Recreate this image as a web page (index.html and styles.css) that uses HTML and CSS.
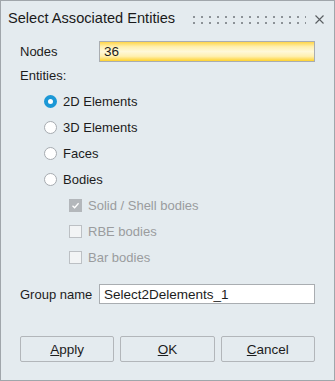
FILE: index.html
```html
<!DOCTYPE html>
<html lang="en">

<head>
    <meta charset="UTF-8">
    <title>Select Associated Entities</title>
    <link rel="stylesheet" href="styles.css">
</head>

<body>
    <div class="dialog">
        <div class="titlebar">
            <span class="title">Select Associated Entities</span>
            <div class="grip"></div>
            <svg class="close" width="9" height="9" viewBox="0 0 9 9">
                <path d="M0.5 0.5 L8.5 8.5 M8.5 0.5 L0.5 8.5" stroke="#5a5e62" stroke-width="1.1" fill="none"/>
            </svg>
        </div>

        <div class="content">
            <div class="row nodes-row">
                <label class="field-label">Nodes</label>
                <div class="input input-yellow">36</div>
            </div>

            <div class="row entities">Entities:</div>

            <div class="row option radio-row">
                <span class="radio checked"></span>
                <span>2D Elements</span>
            </div>
            <div class="row option radio-row">
                <span class="radio"></span>
                <span>3D Elements</span>
            </div>
            <div class="row option radio-row">
                <span class="radio"></span>
                <span>Faces</span>
            </div>
            <div class="row option radio-row">
                <span class="radio"></span>
                <span>Bodies</span>
            </div>

            <div class="row option check-row disabled">
                <span class="check checked">
                    <svg width="9" height="9" viewBox="0 0 9 9">
                        <path d="M1.5 4.8 L3.6 6.8 L7.6 2.2" stroke="#ffffff" stroke-width="1.3" fill="none"/>
                    </svg>
                </span>
                <span>Solid / Shell bodies</span>
            </div>
            <div class="row option check-row disabled">
                <span class="check"></span>
                <span>RBE bodies</span>
            </div>
            <div class="row option check-row disabled">
                <span class="check"></span>
                <span>Bar bodies</span>
            </div>

            <div class="row group-row">
                <label class="field-label">Group name</label>
                <div class="input">Select2Delements_1</div>
            </div>

            <div class="buttons">
                <button class="btn"><u>A</u>pply</button>
                <button class="btn"><u>O</u>K</button>
                <button class="btn"><u>C</u>ancel</button>
            </div>
        </div>
    </div>
</body>

</html>
```

FILE: styles.css
```css
body {
    margin: 0;
    padding: 0;
    font-family: "Liberation Sans", Arial, sans-serif;
    font-size: 13px;
    color: #1c1c1c;
    background: #e4ebef;
}

.dialog {
    box-sizing: border-box;
    width: 335px;
    height: 381px;
    border: 1px solid #a0a6ab;
    background: #e4ebef;
}

.titlebar {
    display: flex;
    align-items: center;
    height: 33px;
    padding-left: 7px;
}

.title {
    font-size: 14.6px;
    color: #1a1a1a;
}

.grip {
    width: 116px;
    height: 12px;
    margin-left: auto;
    margin-top: 4px;
    background-image: radial-gradient(circle, #8c9297 0.9px, transparent 1.3px);
    background-size: 8px 6px;
}

.close {
    margin-left: 9px;
    margin-right: 10px;
    margin-top: 3px;
}

.content {
    padding: 7px 19px 0 19px;
}

.row {
    display: flex;
    align-items: center;
}

.nodes-row {
    height: 21px;
}

.field-label {
    width: 79px;
}

.input {
    box-sizing: border-box;
    flex: 1;
    height: 100%;
    border: 1px solid #a9adb1;
    background: #ffffff;
    padding-left: 4px;
    display: flex;
    align-items: center;
    font-size: 13.5px;
}

.input-yellow {
    background: linear-gradient(to bottom, #ffd64a 0%, #fff0b0 25%, #fff8d8 50%, #fff0b0 75%, #ffd22e 100%);
}

.entities {
    height: 25px;
    margin-top: 1px;
}

.option {
    height: 26px;
}

.radio-row {
    padding-left: 24px;
}

.radio {
    box-sizing: border-box;
    width: 13px;
    height: 13px;
    border-radius: 50%;
    border: 1px solid #a6abb0;
    background: #ffffff;
    margin-right: 6px;
}

.radio.checked {
    border: 4px solid #1c98d6;
    background: #ffffff;
}

.check-row {
    padding-left: 49px;
}

.check {
    box-sizing: border-box;
    width: 13px;
    height: 13px;
    border: 1px solid #bcc0c4;
    background: #f2f4f5;
    margin-right: 6px;
    display: flex;
    align-items: center;
    justify-content: center;
}

.check.checked {
    background: #b3b7bb;
    border-color: #b3b7bb;
}

.disabled {
    color: #9a9c9e;
}

.group-row {
    height: 20px;
    margin-top: 14px;
}

.buttons {
    display: flex;
    gap: 6px;
    margin-top: 32px;
}

.btn {
    flex: 1;
    height: 26px;
    border: 1px solid #b2b6ba;
    border-radius: 2px;
    background: #e4ebef;
    font-family: "Liberation Sans", Arial, sans-serif;
    font-size: 13.5px;
    color: #1c1c1c;
    padding: 0;
}
```
